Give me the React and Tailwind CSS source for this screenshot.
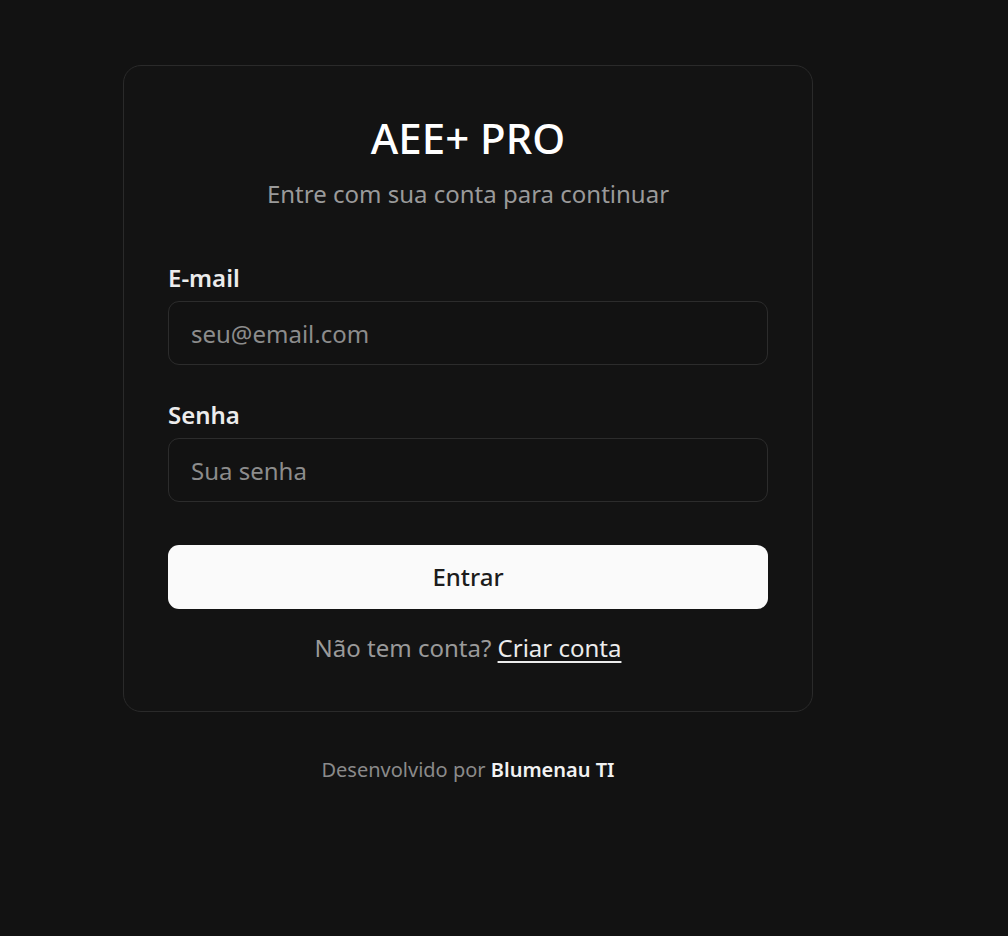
import React from "react";

export default function App() {
  return (
    <div
      className="min-h-screen w-full bg-[#121212] text-[#f2f2f2]"
      style={{ fontFamily: '"Noto Sans", "Open Sans", sans-serif' }}
    >
      <div className="flex w-[936px] flex-col items-center pt-[65px]">
        <div className="w-[690px] rounded-[18px] border border-[#2a2a2a] bg-[#131313] px-[44px] pt-[48px] pb-[47px]">
          <div className="flex flex-col items-center">
            <h1 className="text-[42px] font-medium leading-[48px] text-white">
              AEE+ PRO
            </h1>
            <p className="mt-[16px] text-[24px] leading-[32px] text-[#9a9a9a]">
              Entre com sua conta para continuar
            </p>
          </div>

          <form className="mt-[52px] flex flex-col" onSubmit={(e) => e.preventDefault()}>
            <label className="text-[24px] font-semibold leading-[32px] text-[#ececec]">
              E-mail
            </label>
            <input
              type="email"
              placeholder="seu@email.com"
              className="mt-[7px] h-[64px] w-full rounded-[11px] border border-[#2c2c2c] bg-[#121212] px-[22px] text-[24px] text-white placeholder:text-[#8c8c8c] outline-none"
            />

            <label className="mt-[34px] text-[24px] font-semibold leading-[32px] text-[#ececec]">
              Senha
            </label>
            <input
              type="password"
              placeholder="Sua senha"
              className="mt-[7px] h-[64px] w-full rounded-[11px] border border-[#2c2c2c] bg-[#121212] px-[22px] text-[24px] text-white placeholder:text-[#8c8c8c] outline-none"
            />

            <button
              type="submit"
              className="mt-[43px] h-[64px] w-full rounded-[11px] bg-[#fafafa] text-[24px] font-medium text-[#1c1c1c]"
            >
              Entrar
            </button>

            <p className="mt-[23px] text-center text-[24px] leading-[32px] text-[#9a9a9a]">
              Não tem conta?{" "}
              <a href="#" className="text-[#ececec] underline underline-offset-[4px]">
                Criar conta
              </a>
            </p>
          </form>
        </div>

        <p className="mt-[44px] text-[20px] leading-[28px] text-[#8a8a8a]">
          Desenvolvido por{" "}
          <span className="font-semibold text-[#f2f2f2]">Blumenau TI</span>
        </p>
      </div>
    </div>
  );
}
